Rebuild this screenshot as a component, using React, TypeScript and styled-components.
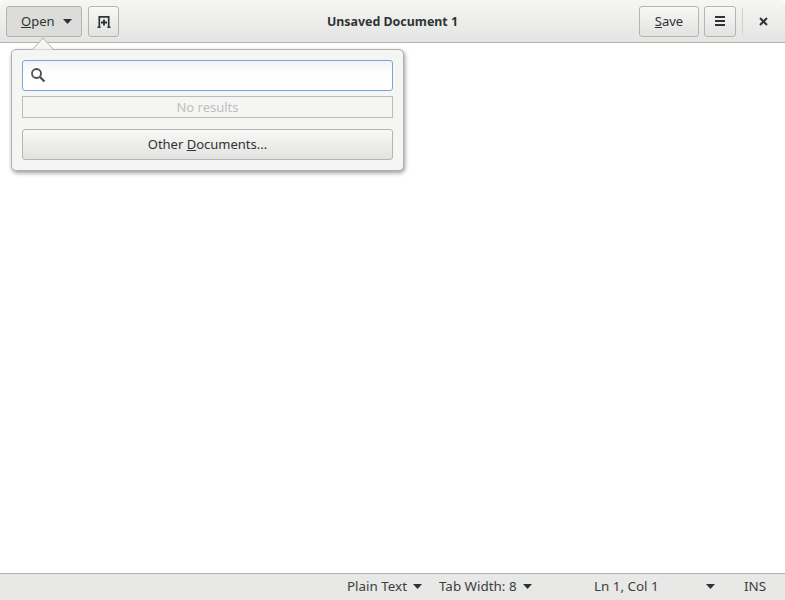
import React from "react";
import styled, { createGlobalStyle } from "styled-components";

const Global = createGlobalStyle`
  html, body { margin: 0; padding: 0; background: #fff; }
  #root { width: 785px; height: 600px; }
  * { box-sizing: border-box; }
`;

const Win = styled.div`
  position: relative;
  width: 785px;
  height: 600px;
  display: flex;
  flex-direction: column;
  overflow: hidden;
  font-family: "Noto Sans", "Open Sans", sans-serif;
  font-size: 13px;
  color: #2e3436;
  background: #fff;
`;

const HeaderBar = styled.header`
  height: 43px;
  flex: none;
  display: grid;
  grid-template-columns: 1fr auto 1fr;
  align-items: start;
  padding: 6px 0 0 6px;
  background: linear-gradient(#f6f6f5, #e4e4e2);
  border-bottom: 1px solid #b2b2af;
  border-radius: 5px 5px 0 0;
  box-shadow: 0 1px 0 #dcdcda;
`;

const Group = styled.div<{ $end?: boolean }>`
  display: flex;
  align-items: flex-start;
  justify-content: ${(p) => (p.$end ? "flex-end" : "flex-start")};
`;

const Button = styled.div<{ $w: number; $active?: boolean; $ml?: number }>`
  width: ${(p) => p.$w}px;
  height: 31px;
  flex: none;
  margin-left: ${(p) => p.$ml ?? 0}px;
  padding-bottom: 1px;
  display: flex;
  align-items: center;
  justify-content: center;
  border: 1px solid #b4b4b1;
  border-radius: 3px;
  background: ${(p) => (p.$active ? "#dcdcda" : "linear-gradient(#f8f8f7, #e2e2e0)")};
  color: #2e3436;
`;

const OpenButton = styled(Button)`
  justify-content: flex-start;
  padding-left: 14px;
`;

const OpenLabel = styled.span`
  margin-right: 8px;
`;

const Title = styled.div`
  height: 31px;
  line-height: 31px;
  text-align: center;
  font-size: 12.4px;
  font-weight: 700;
  color: #2e3436;
  transform: translateX(-3px);
`;

const Sep = styled.div`
  width: 1px;
  height: 27px;
  margin: 2px 0 0 6px;
  background: #d0d0ce;
`;

const CloseBox = styled.div`
  width: 42px;
  height: 31px;
  padding-right: 2px;
  display: flex;
  align-items: center;
  justify-content: center;
`;

const Body = styled.main`
  flex: 1;
  background: #fff;
`;

const StatusBar = styled.footer`
  height: 27px;
  flex: none;
  display: flex;
  align-items: center;
  padding: 0 0 2px 347px;
  background: #e8e8e7;
  border-top: 1px solid #b2b2af;
  color: #3a4042;
  font-size: 13.4px;
`;

const StatusItem = styled.div<{ $w: number }>`
  width: ${(p) => p.$w}px;
  flex: none;
  display: flex;
  align-items: center;
  gap: 6px;
`;

const Spread = styled(StatusItem)`
  justify-content: space-between;
  padding-left: 2px;
  padding-right: 29px;
`;

const Popover = styled.div`
  position: absolute;
  left: 11px;
  top: 49px;
  width: 393px;
  height: 122px;
  padding: 10px;
  display: flex;
  flex-direction: column;
  background: #f5f5f4;
  border: 1px solid #b0b0ad;
  border-radius: 5px;
  box-shadow: 1px 2px 4px rgba(0, 0, 0, 0.4);
`;

const Arrow = styled.svg`
  position: absolute;
  left: 20px;
  top: -13px;
`;

const SearchBox = styled.div`
  height: 31px;
  flex: none;
  display: flex;
  align-items: center;
  padding: 0 0 2px 7px;
  border: 1px solid #74a7e0;
  border-radius: 3px;
  background: linear-gradient(#f4f4f4, #ffffff 45%);
`;

const NoResults = styled.div`
  height: 22px;
  flex: none;
  margin-top: 5px;
  display: flex;
  align-items: center;
  justify-content: center;
  border: 1px solid #bcbcb9;
  background: #f5f5f4;
  color: #bdbfbf;
`;

const OtherButton = styled.div`
  height: 31px;
  flex: none;
  margin-top: 11px;
  padding-bottom: 2px;
  display: flex;
  align-items: center;
  justify-content: center;
  border: 1px solid #b4b4b1;
  border-radius: 3px;
  background: linear-gradient(#f8f8f7, #e2e2e0);
`;

const U = styled.span`
  text-decoration: underline;
`;

const Caret = () => (
  <svg width="9" height="5" viewBox="0 0 9 5">
    <path d="M0 0h9L4.5 5z" fill="#2e3436" />
  </svg>
);

export default function App() {
  return (
    <Win>
      <Global />
      <HeaderBar>
        <Group>
          <OpenButton $w={76} $active>
            <OpenLabel>
              <U>O</U>pen
            </OpenLabel>
            <Caret />
          </OpenButton>
          <Button $w={31} $ml={6}>
            <svg width="14" height="13" viewBox="0 0 14 13">
              <path d="M2.3 12V1.8h9.4V12" fill="none" stroke="#2e3436" strokeWidth="1.7" />
              <path d="M0.5 12.2h3M10.5 12.2h3" stroke="#2e3436" strokeWidth="1.5" />
              <path d="M7 4.5v6M4 7.5h6" stroke="#2e3436" strokeWidth="1.8" />
            </svg>
          </Button>
        </Group>
        <Title>Unsaved Document 1</Title>
        <Group $end>
          <Button $w={60}>
            <span>
              <U>S</U>ave
            </span>
          </Button>
          <Button $w={32} $ml={5}>
            <svg width="10" height="10" viewBox="0 0 10 10">
              <path d="M0 1h10M0 5h10M0 9h10" stroke="#2e3436" strokeWidth="1.8" />
            </svg>
          </Button>
          <Sep />
          <CloseBox>
            <svg width="9" height="9" viewBox="0 0 9 9">
              <path d="M1 1l7 7M8 1L1 8" stroke="#2e3436" strokeWidth="2" />
            </svg>
          </CloseBox>
        </Group>
      </HeaderBar>
      <Body />
      <StatusBar>
        <StatusItem $w={92}>
          Plain Text <Caret />
        </StatusItem>
        <StatusItem $w={153}>
          Tab Width: 8 <Caret />
        </StatusItem>
        <Spread $w={152}>
          Ln 1, Col 1 <Caret />
        </Spread>
        <span>INS</span>
      </StatusBar>
      <Popover>
        <Arrow width="22" height="13" viewBox="0 0 22 13">
          <path d="M0.5 12.5L11 1l10.5 11.5" fill="#f5f5f4" stroke="#b0b0ad" />
        </Arrow>
        <SearchBox>
          <svg width="16" height="16" viewBox="0 0 16 16">
            <circle cx="6.5" cy="6.5" r="4.5" fill="none" stroke="#4a5052" strokeWidth="1.8" />
            <path d="M10 10l4.5 4.5" stroke="#4a5052" strokeWidth="2.2" />
          </svg>
        </SearchBox>
        <NoResults>No results</NoResults>
        <OtherButton>
          <span>
            Other <U>D</U>ocuments...
          </span>
        </OtherButton>
      </Popover>
    </Win>
  );
}
